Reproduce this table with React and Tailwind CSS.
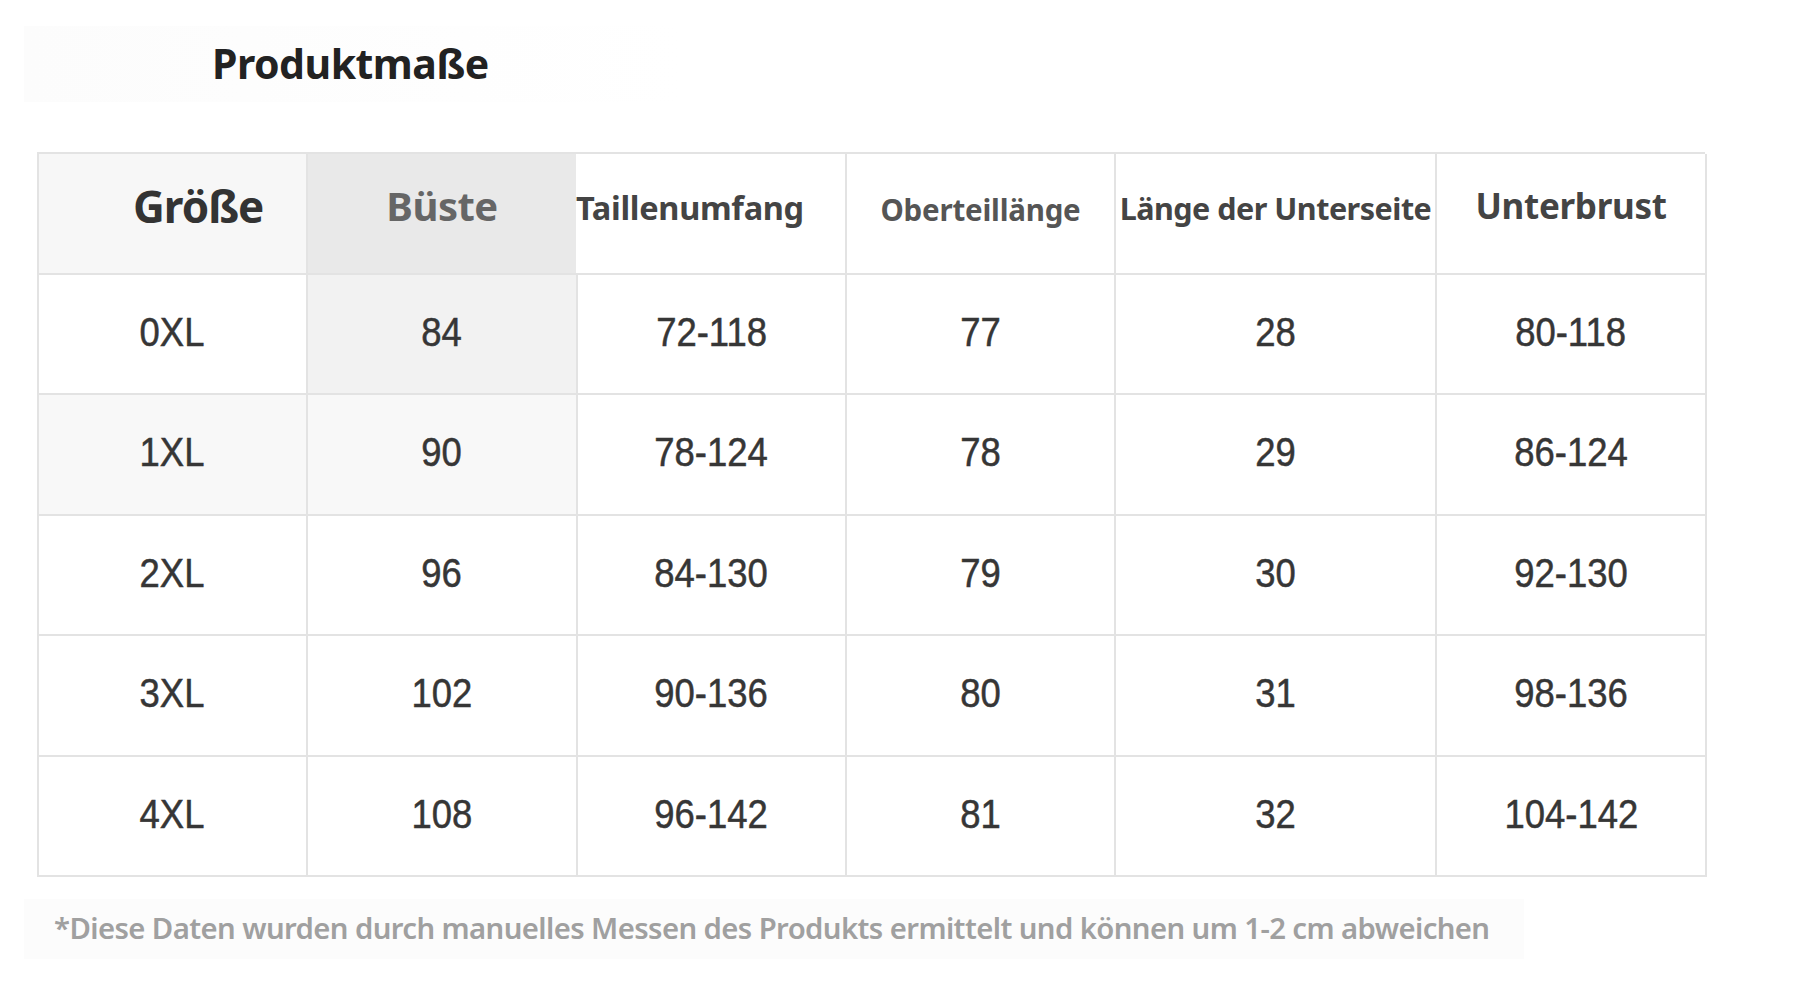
const COLS = "grid-cols-[269px_270px_269px_269px_321px_270px]";

const rows = [
  ["0XL", "84", "72-118", "77", "28", "80-118"],
  ["1XL", "90", "78-124", "78", "29", "86-124"],
  ["2XL", "96", "84-130", "79", "30", "92-130"],
  ["3XL", "102", "90-136", "80", "31", "98-136"],
  ["4XL", "108", "96-142", "81", "32", "104-142"],
];

function Num({ children }) {
  return (
    <span className="inline-block scale-x-[0.9] font-['Liberation_Sans',Arial,sans-serif] text-[40.5px] leading-none text-[#363636] [-webkit-text-stroke:0.5px_#363636]">
      {children}
    </span>
  );
}

function cellBg(r, c) {
  if (r === 0 && c === 1) return "bg-[#f2f2f2]";
  if (r === 1 && c < 2) return "bg-[#f8f8f8]";
  return "bg-white";
}

export default function App() {
  return (
    <div className="w-[1800px] h-[998px] bg-white font-['Noto_Sans',sans-serif] overflow-hidden">
      <div className="pt-[26px] pl-[24px]">
        <div className="w-[660px] h-[76px] bg-gradient-to-r from-[#fcfcfc] to-white flex items-center pl-[188px]">
          <h1 className="text-[41px] font-bold text-[#222] tracking-[-0.5px]">Produktmaße</h1>
        </div>
      </div>

      <div className={`ml-[37px] mt-[50px] grid ${COLS} border-l-2 border-t-2 border-[#e3e3e3] w-[1668px]`}>
        <div className="h-[120.5px] border-r-2 border-b-2 border-[#e3e3e3] bg-[#f7f7f7] flex items-center pl-[94px] pb-[14px]">
          <span className="text-[44px] font-bold text-[#333] tracking-[-1px]">Größe</span>
        </div>
        <div className="h-[120.5px] border-r-2 border-b-2 border-[#e3e3e3] bg-[#e9e9e9] flex items-center justify-center pb-[14px]">
          <span className="text-[40px] font-bold text-[#666] tracking-[-0.5px]">Büste</span>
        </div>
        <div className="h-[120.5px] border-r-2 border-b-2 border-[#e3e3e3] bg-white flex items-center pb-[9px] -ml-[2px]">
          <span className="text-[32.5px] font-bold text-[#444] tracking-[-0.3px] whitespace-nowrap">Taillenumfang</span>
        </div>
        <div className="h-[120.5px] border-r-2 border-b-2 border-[#e3e3e3] bg-white flex items-center justify-center pb-[7px]">
          <span className="text-[29.5px] font-bold text-[#555] tracking-[-0.2px] whitespace-nowrap">Oberteillänge</span>
        </div>
        <div className="h-[120.5px] border-r-2 border-b-2 border-[#e3e3e3] bg-white flex items-center justify-center pb-[8px]">
          <span className="text-[30.5px] font-bold text-[#444] tracking-[-0.5px] whitespace-nowrap">Länge der Unterseite</span>
        </div>
        <div className="h-[120.5px] border-r-2 border-b-2 border-[#e3e3e3] bg-white flex items-center justify-center pb-[14px]">
          <span className="text-[35px] font-bold text-[#444] tracking-[-0.3px]">Unterbrust</span>
        </div>

        {rows.map((row, r) =>
          row.map((val, c) => (
            <div
              key={r + "-" + c}
              className={`h-[120.5px] border-r-2 border-b-2 border-[#e3e3e3] ${cellBg(r, c)} flex items-center justify-center pb-[4px]`}
            >
              <Num>{val}</Num>
            </div>
          ))
        )}
      </div>

      <div className="ml-[24px] mt-[22px] w-[1500px] h-[60px] bg-[#fcfcfc] flex items-center pl-[30px]">
        <p className="text-[29.3px] font-semibold text-[#a0a0a0] tracking-[-0.6px] whitespace-nowrap">
          *Diese Daten wurden durch manuelles Messen des Produkts ermittelt und können um 1-2 cm abweichen
        </p>
      </div>
    </div>
  );
}
